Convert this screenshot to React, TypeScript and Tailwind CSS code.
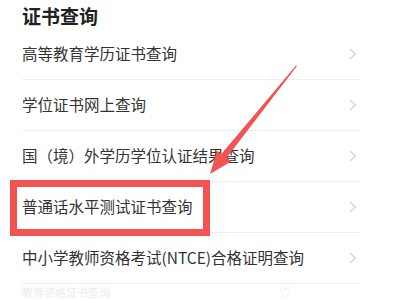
import React from "react";

const items = [
  "高等教育学历证书查询",
  "学位证书网上查询",
  "国（境）外学历学位认证结果查询",
  "普通话水平测试证书查询",
  "中小学教师资格考试(NTCE)合格证明查询",
];

const Chevron = () => (
  <svg width="8" height="12" viewBox="0 0 8 12" className="shrink-0">
    <polyline points="1,1 6.5,6 1,11" fill="none" stroke="#d2d2d2" strokeWidth="1.2" />
  </svg>
);

const App: React.FunctionComponent<{}> = () => {
  return (
    <div
      className="relative w-[400px] h-[300px] overflow-hidden bg-white text-[#333]"
      style={{ fontFamily: '"Noto Sans CJK SC", "Noto Sans", sans-serif' }}
    >
      <div className="h-[29px] pl-[22px] pt-[2px] flex items-center text-[19px] font-bold text-[#222] leading-none">
        证书查询
      </div>
      <div className="ml-[22px] w-[338px] flex flex-col">
        {items.map((item) => (
          <div key={item} className="h-[51px] flex items-center justify-between border-b border-[#eeeeee] pr-[3px]">
            <span className="text-[15.5px] leading-none">{item}</span>
            <Chevron />
          </div>
        ))}
        <div className="h-[14px] flex items-end gap-[170px] text-[11px] leading-none text-[#ececec]">
          <span>教师资格证书查询</span>
          <span className="text-[#e4e4e4]">♡</span>
        </div>
      </div>

      {/* annotation: red box */}
      <div className="absolute left-[10px] top-[180px] w-[200px] h-[56px] border-[7px] border-[#f35452]" />

      {/* annotation: arrow */}
      <svg className="absolute left-0 top-0" width="400" height="300" viewBox="0 0 400 300">
        <polygon
          points="297,66 226.8,157.5 231,161.5 210,174 217,150.5 221.4,154 296,65.5"
          fill="#f35452"
        />
      </svg>
    </div>
  );
};

export default App;
